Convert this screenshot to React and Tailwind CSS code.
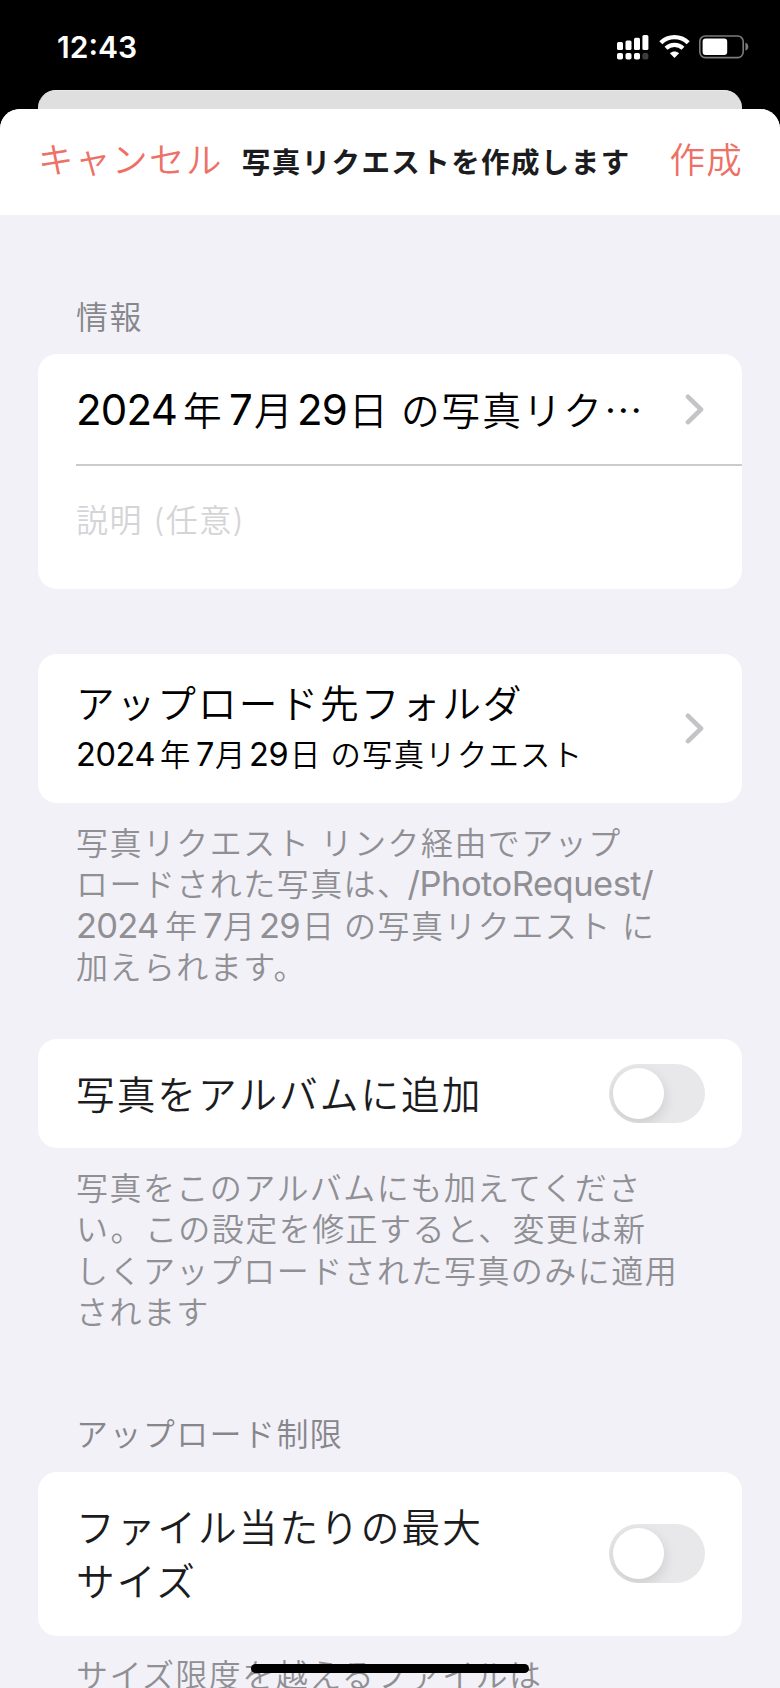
import React, { useState } from 'react';

const LATIN = 'font-normal leading-none';

const DATE_SIZES = {
  title: {
    digits: 'text-[42px] tracking-[-0.8px]',
    cells: ['w-[107px]', 'w-[46px]', 'w-[25px]', 'w-[43px]', 'w-[52px]', 'w-[52px]'],
  },
  subtitle: {
    digits: 'text-[32.5px] tracking-[-0.4px]',
    cells: ['w-[84px]', 'w-[36px]', 'w-[19px]', 'w-[34px]', 'w-[41px]', 'w-[40.5px]'],
  },
  footnote: {
    digits: 'text-[34.5px] tracking-[-0.8px]',
    cells: ['w-[89px]', 'w-[38px]', 'w-[20px]', 'w-[36px]', 'w-[43px]', 'w-[42px]'],
  },
};

function DateText({ size }) {
  const { digits, cells } = DATE_SIZES[size];
  return ['2024', '年', '7', '月', '29', '日 '].map((part, i) => (
    <span
      key={part}
      className={`inline-block leading-none whitespace-pre ${cells[i]} ${i % 2 === 0 ? `${digits} ${LATIN}` : ''}`}
    >
      {part}
    </span>
  ));
}

function StatusBar() {
  return (
    <div className="flex h-[90px] items-start justify-between bg-black pr-[31px] pl-[57px] text-white">
      <span className="pt-[27px] text-[30px] leading-[40px] font-semibold">12:43</span>
      <div className="flex items-start pt-[34px]">
        <svg width="32" height="27" viewBox="0 0 32 27" fill="#fff">
          <rect x="0" y="8" width="6" height="8" rx="1.6" />
          <rect x="8.5" y="6.5" width="6" height="9.5" rx="1.6" />
          <rect x="17" y="3.8" width="6" height="12.2" rx="1.6" />
          <rect x="25.4" y="1" width="6" height="15" rx="1.6" />
          <rect x="0" y="19" width="6" height="6.5" rx="1.8" />
          <rect x="8.5" y="19" width="6" height="6.5" rx="1.8" />
          <rect x="17" y="19" width="6" height="6.5" rx="1.8" />
          <rect x="25.4" y="19" width="6" height="6.5" rx="1.8" fill="#3c3c3c" />
        </svg>
        <svg className="ml-[10px]" width="31" height="25" viewBox="0 0 31 25" fill="none" stroke="#fff">
          <path d="M1.8 8.8C9.5 1.2 21.5 1.2 29.2 8.8" strokeWidth="4.4" />
          <path d="M7 14.3C11.8 9.7 19.2 9.7 24 14.3" strokeWidth="4.2" />
          <path d="M15.5 24L10.9 19.2C13.6 16.8 17.4 16.8 20.1 19.2Z" fill="#fff" stroke="none" />
        </svg>
        <svg className="ml-[9px]" width="50" height="26" viewBox="0 0 50 26">
          <rect x="0.8" y="2" width="43.4" height="21.6" rx="5.5" fill="none" stroke="#7b7b7b" strokeWidth="1.6" />
          <rect x="3.6" y="4.6" width="24.6" height="16.4" rx="3" fill="#fff" />
          <path d="M46.4 8.8C50.3 9.8 50.3 15.6 46.4 16.6Z" fill="#7b7b7b" />
        </svg>
      </div>
    </div>
  );
}

function Chevron() {
  return (
    <svg width="19" height="31" viewBox="0 0 19 31" fill="none" stroke="#c4c4c6" strokeWidth="4.6" strokeLinecap="round" strokeLinejoin="round">
      <path d="M3 2.8L16 15.5L3 28.2" />
    </svg>
  );
}

function Toggle({ label }) {
  const [on, setOn] = useState(false);
  return (
    <button
      role="switch"
      aria-checked={on}
      aria-label={label}
      onClick={() => setOn(!on)}
      className={`flex h-[59px] w-[96px] shrink-0 items-center overflow-hidden rounded-full px-[3.5px] ${on ? 'justify-end bg-[#34c759]' : 'bg-[#e8e8ea]'}`}
    >
      <span className="size-[51px] rounded-full bg-white shadow-[0_5px_14px_rgba(0,0,0,0.13)]" />
    </button>
  );
}

function Card({ className, children }) {
  return <section className={`mx-[38px] rounded-[19px] bg-white ${className}`}>{children}</section>;
}

function Footnote({ className, children }) {
  return (
    <p className={`pl-[76px] text-[32px] leading-[41.4px] tracking-[1.45px] whitespace-nowrap text-[#8f8f94] ${className}`}>
      {children}
    </p>
  );
}

export default function App() {
  return (
    <div className="h-[1688px] w-[780px] overflow-hidden bg-black font-[Inter,'Noto_Sans_CJK_JP',sans-serif] font-[350] text-black" lang="ja">
      <StatusBar />

      {/* edge of the screen behind the sheet */}
      <div className="mx-[38px] h-[19px] rounded-t-[18px] border-t border-[#ebebeb] bg-[#dfdfdf]" />

      <div className="relative h-[1579px] overflow-hidden rounded-t-[20px] bg-[#f2f1f7]">
        <header className="flex h-[106px] items-start justify-between bg-white pr-[37px] pl-[38px]">
          <button className="pt-[32px] text-[35.5px] leading-[40px] tracking-[1.5px] text-[#ed7166]">キャンセル</button>
          <h1 className="pt-[34px] text-[28.5px] leading-[40px] font-bold tracking-[1.4px] text-[#1c1c1e]">
            写真リクエストを作成します
          </h1>
          <button className="pt-[32px] pl-[20px] text-[35.5px] leading-[40px] tracking-[1.3px] text-[#ed7166]">作成</button>
        </header>

        <h2 className="mt-[83px] pl-[76px] text-[32px] leading-[40px] tracking-[1.4px] text-[#86868b]">情報</h2>

        <Card className="mt-[16px] h-[235px]">
          <div className="flex h-[110px] items-center justify-between pr-[38px] pl-[38px]">
            <span className="text-[38.7px] leading-[54px] tracking-[1.9px] whitespace-nowrap">
              <DateText size="title" />
              の写真リク<span className="font-['Noto_Sans_CJK_JP']">…</span>
            </span>
            <Chevron />
          </div>
          <div className="ml-[38px] h-[1.5px] bg-[#cbcbcd]" />
          <p className="pt-[34px] pl-[38px] text-[32px] leading-[42px] tracking-[1.4px] text-[#d5d5d8]">説明 (任意)</p>
        </Card>

        <Card className="mt-[65px] flex h-[149px] items-center justify-between pr-[38px] pl-[38px]">
          <div className="pb-px whitespace-nowrap">
            <p className="text-[38.7px] leading-[54px] tracking-[2px]">アップロード先フォルダ</p>
            <p className="text-[30.3px] leading-[48px] tracking-[1.3px]">
              <DateText size="subtitle" />
              の写真リクエスト
            </p>
          </div>
          <Chevron />
        </Card>
        <Footnote className="mt-[20px]">
          写真リクエスト リンク経由でアップ
          <br />
          ロードされた写真は、
          <span className={`${LATIN} -ml-[3px] text-[34.5px] tracking-[-0.5px]`}>/PhotoRequest/</span>
          <br />
          <DateText size="footnote" />
          の写真リクエスト に
          <br />
          加えられます。
        </Footnote>

        <Card className="mt-[50.4px] flex h-[109px] items-center justify-between pr-[37px] pl-[38px]">
          <span className="pt-[3px] text-[38.7px] leading-[54px] tracking-[2px] text-[#1c1c1e]">写真をアルバムに追加</span>
          <Toggle label="写真をアルバムに追加" />
        </Card>
        <Footnote className="mt-[20px]">
          写真をこのアルバムにも加えてくださ
          <br />
          い<span className="mr-px ml-px">。</span>この設定を修正すると<span className="mr-px">、</span>変更は新
          <br />
          しくアップロードされた写真のみに適用
          <br />
          されます
        </Footnote>

        <h2 className="mt-[81.4px] pl-[76px] text-[32px] leading-[40px] tracking-[1.4px] text-[#86868b]">アップロード制限</h2>

        <Card className="mt-[16.5px] flex h-[164px] items-center justify-between pr-[37px] pl-[38px]">
          <span className="pt-[2px] text-[38.7px] leading-[54px] tracking-[2px] text-[#1c1c1e]">
            ファイル当たりの最大
            <br />
            サイズ
          </span>
          <Toggle label="ファイル当たりの最大サイズ" />
        </Card>
        <Footnote className="mt-[19px]">サイズ限度を越えるファイルは</Footnote>

        {/* home indicator */}
        <div className="absolute bottom-[15px] left-[251px] h-[9.5px] w-[278px] rounded-full bg-black" />
      </div>
    </div>
  );
}
